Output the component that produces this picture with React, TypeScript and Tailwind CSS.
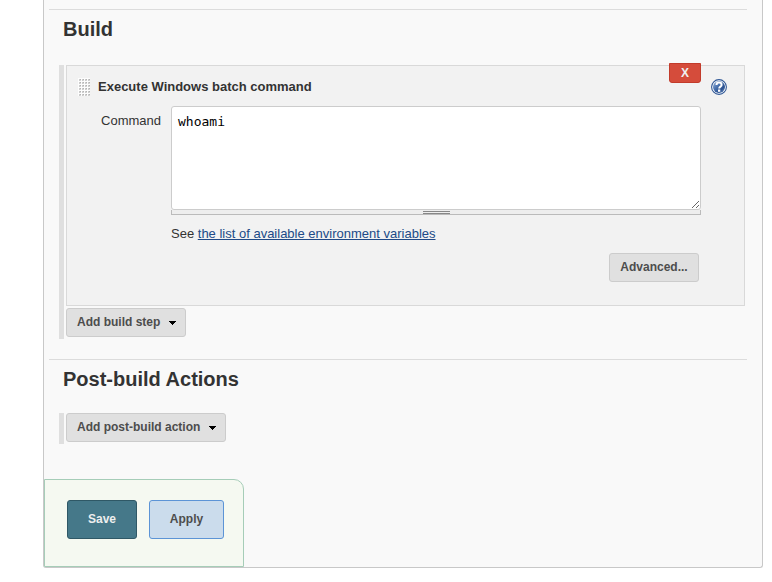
import React from "react";

const grayButton =
  "flex h-[29px] items-center justify-center rounded-[3px] border border-[#cccccc] bg-[#e0e0e0] pb-px text-[12px] font-bold text-[#4d4d4d]";

function Caret() {
  return (
    <svg width="7" height="4" viewBox="0 0 7 4" shapeRendering="crispEdges" className="mt-px ml-[9px]" aria-hidden="true">
      <path d="M0 0h7v1H0zM1 1h5v1H1zM2 2h3v1H2zM3 3h1v1H3z" fill="#000" />
    </svg>
  );
}

function Grip() {
  return (
    <svg width="12" height="18" viewBox="0 0 12 18" shapeRendering="crispEdges" aria-hidden="true">
      <defs>
        <pattern id="grip-dots" width="3" height="3" patternUnits="userSpaceOnUse">
          <rect width="3" height="3" fill="#fdfdfd" />
          <rect x="1" y="1" width="2" height="2" fill="#cccccc" />
          <rect x="2" y="1" width="1" height="1" fill="#b4b4b4" />
          <rect x="2" y="2" width="1" height="1" fill="#d6d6d6" />
        </pattern>
      </defs>
      <rect width="12" height="18" fill="url(#grip-dots)" />
    </svg>
  );
}

function HelpIcon() {
  return (
    <svg width="16" height="16" viewBox="0 0 16 16" aria-hidden="true">
      <defs>
        <linearGradient id="help-fill" x1="0" y1="0" x2="1" y2="1">
          <stop offset="0" stopColor="#9fb8dc" />
          <stop offset="0.4" stopColor="#4a73b0" />
          <stop offset="0.7" stopColor="#2a5190" />
          <stop offset="1" stopColor="#7f9fcd" />
        </linearGradient>
      </defs>
      <circle cx="8" cy="8" r="7.4" fill="#fff" stroke="#2f5795" strokeWidth="1.1" />
      <circle cx="8" cy="8" r="6" fill="url(#help-fill)" />
      <path d="M5.5 6C5.5 4.2 6.6 3.6 8 3.6s2.6.8 2.6 2.3c0 1.7-2.4 1.7-2.4 3.5" fill="none" stroke="#fff" strokeWidth="2" />
      <rect x="7" y="10.5" width="2.3" height="2.3" fill="#fff" />
    </svg>
  );
}

function SectionHeading({ children }: { children: React.ReactNode }) {
  return (
    <h2 className="mr-[15px] ml-[5px] border-t border-[#dcdcdc] px-[14px] pt-[7px] text-[20px] leading-[24px] font-bold text-[#333333]">
      {children}
    </h2>
  );
}

export default function App() {
  return (
    <main className="min-h-screen bg-white pr-[9px] pl-[43px] text-[13px] leading-[16px] text-[#333333] [font-family:'Liberation_Sans',Arial,sans-serif]">
      <form
        onSubmit={(e) => e.preventDefault()}
        className="rounded-b-[3px] border border-t-0 border-[#c8c8c8] bg-[#f9f9f9] pt-[9px]"
      >
        <SectionHeading>Build</SectionHeading>
        <section className="mt-6 mr-[17px] ml-[15px] border-l-[5px] border-[#dfdfdf] pb-[2px] pl-[2px]">
          <div className="relative border border-[#d9d9d9] bg-[#f2f2f2] pt-3 pr-[43px] pb-[23px] pl-[11px]">
            <button
              type="button"
              aria-label="Delete build step"
              className="absolute -top-[3px] right-[43px] h-5 w-8 rounded-b-[3px] border border-[#c23b2b] bg-[#d54c3b] text-[12px] leading-[18px] font-bold text-[#f0f0f0]"
            >
              X
            </button>
            <div className="-mr-[26px] flex h-[18px] items-center">
              <Grip />
              <h3 className="ml-2 grow font-bold">Execute Windows batch command</h3>
              <button type="button" aria-label="Help">
                <HelpIcon />
              </button>
            </div>
            <div className="mt-[10px] flex">
              <label htmlFor="command" className="w-[83px] shrink-0 pt-[7px] text-right">
                Command
              </label>
              <div className="ml-[10px] grow">
                <textarea
                  id="command"
                  defaultValue="whoami"
                  spellCheck={false}
                  className="block h-[104px] w-full resize-y rounded-[3px] border border-[#cccccc] bg-white px-[6px] py-[7px] text-[13px] leading-[16px] text-black outline-none [font-family:'DejaVu_Sans_Mono',monospace]"
                />
                <div className="flex h-[5px] justify-center border border-t-0 border-[#bbbbbb] bg-[#eeeeee] pt-px">
                  <div className="h-[3px] w-[27px] shrink-0 border-y border-[#888888]" />
                </div>
                <p className="mt-[11px]">
                  See{" "}
                  <a href="#env" className="text-[#204a87] underline">
                    the list of available environment variables
                  </a>
                </p>
                <div className="mt-[11px] mr-[2px] flex justify-end">
                  <button type="button" className={`min-w-[90px] px-[10px] ${grayButton}`}>
                    Advanced...
                  </button>
                </div>
              </div>
            </div>
          </div>
          <button type="button" className={`mt-[2px] pr-[9px] pl-[10px] ${grayButton}`}>
            Add build step
            <Caret />
          </button>
        </section>
        <div className="mt-5">
          <SectionHeading>Post-build Actions</SectionHeading>
        </div>
        <section className="mt-[22px] mr-[17px] ml-[15px] border-l-[5px] border-[#dfdfdf] pb-[2px] pl-[2px]">
          <button type="button" className={`pr-[9px] pl-[10px] ${grayButton}`}>
            Add post-build action
            <Caret />
          </button>
        </section>
        <div className="mt-[35px] flex w-[200px] gap-3 rounded-tr-[10px] border border-[#a6cdb8] bg-[#f5f9f1] pt-5 pb-[27px] pl-[22px]">
          <button
            type="submit"
            className="h-[39px] w-[70px] rounded-[3px] border border-[#2f5866] bg-[#457889] pb-[2px] text-[12px] font-bold text-[#eeeeee]"
          >
            Save
          </button>
          <button
            type="button"
            className="h-[39px] w-[75px] rounded-[3px] border border-[#5c94d6] bg-[#cbdcec] pb-[2px] text-[12px] font-bold text-[#4d4d4d]"
          >
            Apply
          </button>
        </div>
      </form>
    </main>
  );
}
